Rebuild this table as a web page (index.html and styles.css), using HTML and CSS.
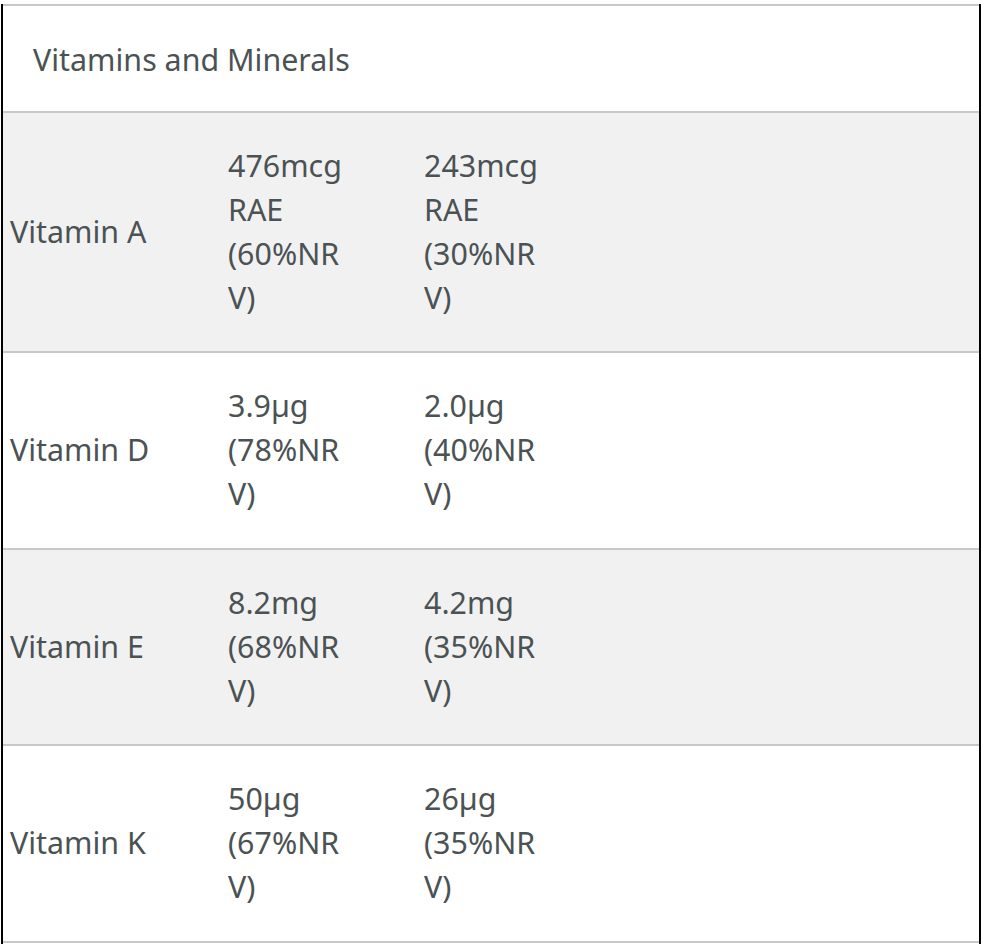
FILE: index.html
```html
<!DOCTYPE html>
<html lang="en">
<head>
<meta charset="utf-8">
<title>Vitamins and Minerals</title>
<link rel="stylesheet" href="styles.css">
</head>
<body>
<div class="frame">
  <div class="table">
    <div class="head">Vitamins and Minerals</div>
    <div class="row shaded">
      <div class="name">Vitamin A</div>
      <div class="val">476mcg RAE (60%NRV)</div>
      <div class="val">243mcg RAE (30%NRV)</div>
      <div class="rest"></div>
    </div>
    <div class="row">
      <div class="name">Vitamin D</div>
      <div class="val">3.9µg (78%NRV)</div>
      <div class="val">2.0µg (40%NRV)</div>
      <div class="rest"></div>
    </div>
    <div class="row shaded">
      <div class="name">Vitamin E</div>
      <div class="val">8.2mg (68%NRV)</div>
      <div class="val">4.2mg (35%NRV)</div>
      <div class="rest"></div>
    </div>
    <div class="row">
      <div class="name">Vitamin K</div>
      <div class="val">50µg (67%NRV)</div>
      <div class="val">26µg (35%NRV)</div>
      <div class="rest"></div>
    </div>
  </div>
</div>
</body>
</html>
```

FILE: styles.css
```css
html, body {
  margin: 0;
  padding: 0;
  background: #ffffff;
}
body {
  padding: 4px 1px 0 1px;
  font-family: "Noto Sans", "Open Sans", sans-serif;
  color: #4b5254;
}
.frame {
  width: 976px;
  border-left: 2px solid #000;
  border-right: 2px solid #000;
  min-height: 940px;
}
.table {
  border-top: 2px solid #c8c8c8;
}
.head {
  font-size: 30.4px;
  line-height: 45px;
  padding: 31px 30px 29px 30px;
  border-bottom: 2px solid #c8c8c8;
}
.row {
  display: grid;
  grid-template-columns: 225px 196px 196px 1fr;
  align-items: center;
  border-bottom: 2px solid #c8c8c8;
  font-size: 30.4px;
  line-height: 44px;
  padding: 31px 0 31.4px;
}
.row.shaded {
  background: #f1f1f1;
}
.name {
  padding-left: 7px;
}
.val {
  width: 125px;
  overflow-wrap: anywhere;
}
```
